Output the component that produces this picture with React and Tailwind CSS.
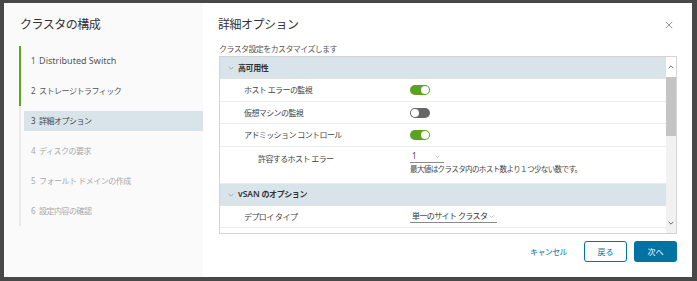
import React from 'react';

const FONT = { fontFamily: '"Noto Sans", "Noto Sans CJK JP", sans-serif' };

const steps = [
    { n: 1, label: 'Distributed Switch', done: true },
    { n: 2, label: 'ストレージトラフィック', done: true },
    { n: 3, label: '詳細オプション', active: true },
    { n: 4, label: 'ディスクの要求' },
    { n: 5, label: 'フォールト ドメインの作成' },
    { n: 6, label: '設定内容の確認' },
];

const Chevron = ({ className = '', up = false }) => (
    <svg viewBox="0 0 10 6" className={className} fill="none" stroke="currentColor" strokeWidth="1.2">
        {up ? <path d="M1 5 L5 1 L9 5" /> : <path d="M1 1 L5 5 L9 1" />}
    </svg>
);

const Toggle = ({ on }) => (
    <div className={`w-[20px] h-[10px] rounded-full flex items-center px-[1px] ${on ? 'bg-[#5aa220] justify-end' : 'bg-[#666666] justify-start'}`}>
        <div className="w-[8px] h-[8px] rounded-full bg-white" />
    </div>
);

const SectionHeader = ({ title }) => (
    <div className="h-[22px] bg-[#d9e4ea] flex items-center pl-[8px] text-[#333] border-b border-[#e3e3e3]">
        <Chevron className="w-[6px] h-[4px] text-[#8a9aa5] mr-[4px]" />
        <span className="text-[8px] tracking-[-0.4px] font-semibold">{title}</span>
    </div>
);

const Row = ({ label, children, h = 'h-[22px]' }) => (
    <div className={`${h} flex items-center border-b border-[#ececec]`}>
        <div className="w-[190px] pl-[24px] text-[8px] tracking-[-0.6px] text-[#444]">{label}</div>
        <div>{children}</div>
    </div>
);

export default function App() {
    return (
        <div className="w-[697px] h-[281px] bg-[#484848] pt-[3px] pl-[4px] pr-[5px] pb-[4px]" style={FONT}>
            <div className="flex h-full w-full">
                {/* wizard steps */}
                <div className="w-[199px] bg-[#fafafa] pt-[14px]">
                    <h2 className="pl-[16px] text-[12px] leading-[16px] tracking-[-0.5px] text-[#333]">クラスタの構成</h2>
                    <div className="mt-[13px] ml-[15px]">
                        {steps.map((s) => (
                            <div
                                key={s.n}
                                className={`h-[30px] border-l-2 ${s.done ? 'border-[#62a420]' : 'border-[#eaeaea]'} pl-[3px] flex items-center`}
                            >
                                <div
                                    className={`h-[20px] w-full flex items-center pl-[7px] text-[8px] tracking-[-0.5px] ${
                                        s.active ? 'bg-[#d9e4ea] text-[#444]' : s.done ? 'text-[#555]' : 'text-[#a8a8a8]'
                                    }`}
                                >
                                    <span className="mr-[4px]">{s.n}</span>
                                    <span className={s.n === 1 ? 'text-[9px] tracking-normal' : ''}>{s.label}</span>
                                </div>
                            </div>
                        ))}
                    </div>
                </div>

                {/* content */}
                <div className="flex-1 bg-white flex flex-col pl-[16px] pr-[15px] pt-[14px]">
                    <div className="flex items-center justify-between h-[16px]">
                        <h2 className="-ml-[1px] text-[12px] leading-[16px] tracking-[-0.5px] text-[#333]">詳細オプション</h2>
                        <svg viewBox="0 0 10 10" className="w-[8px] h-[8px] mr-[4px] text-[#777]" stroke="currentColor" strokeWidth="1">
                            <path d="M1 1 L9 9 M9 1 L1 9" />
                        </svg>
                    </div>
                    <p className="mt-[11px] text-[8px] leading-[10px] tracking-[-0.6px] text-[#555]">クラスタ設定をカスタマイズします</p>

                    <div className="mt-[2px] h-[178px] border border-[#d4d4d4] flex">
                        <div className="flex-1 overflow-hidden">
                            <SectionHeader title="高可用性" />
                            <Row label="ホスト エラーの監視" h="h-[23px]"><Toggle on /></Row>
                            <Row label="仮想マシンの監視"><Toggle on={false} /></Row>
                            <Row label="アドミッション コントロール" h="h-[23px]"><Toggle on /></Row>
                            <div className="h-[37px] flex items-start border-b border-[#ececec]">
                                <div className="w-[190px] pl-[38px] pt-[6px] text-[8px] tracking-[-0.6px] text-[#444]">許容するホスト エラー</div>
                                <div className="pt-[3px]">
                                    <div className="w-[34px] h-[13px] border-b border-[#8a8a8a] flex items-center justify-between pl-[2px] pr-[4px] text-[8px] text-[#444]">
                                        <span>1</span>
                                        <Chevron className="w-[5px] h-[3px] text-[#999]" />
                                    </div>
                                    <div className="mt-[1px] text-[7.5px] leading-[10px] tracking-[-0.6px] text-[#444] whitespace-nowrap">
                                        最大値はクラスタ内のホスト数より１つ少ない数です。
                                    </div>
                                </div>
                            </div>
                            <SectionHeader title={<><span className="text-[8.5px] tracking-normal">vSAN</span> のオプション</>} />
                            <Row label="デプロイ タイプ">
                                <div className="w-[87px] h-[13px] border-b border-[#8a8a8a] flex items-center justify-between pl-[2px] pr-[3px] text-[8px] tracking-[-0.6px] text-[#333]">
                                    <span>単一のサイト クラスタ</span>
                                    <Chevron className="w-[5px] h-[3px] text-[#999]" />
                                </div>
                            </Row>
                            <div className="h-[22px] flex items-start pt-[6px]">
                                <div className="w-[190px]" />
                                <div className="pl-[6px]"><div className="w-[10px] h-[2px] bg-[#666]" /></div>
                            </div>
                        </div>
                        {/* scrollbar */}
                        <div className="w-[10px] bg-[#f1f1f1] flex flex-col items-center">
                            <div className="h-[20px] w-full bg-white flex items-center justify-center">
                                <Chevron up className="w-[6px] h-[4px] text-[#333]" />
                            </div>
                            <div className="w-full h-[59px] bg-[#c4c4c4]" />
                            <div className="flex-1" />
                            <div className="h-[20px] w-full flex items-center justify-center">
                                <Chevron className="w-[6px] h-[4px] text-[#333]" />
                            </div>
                        </div>
                    </div>

                    <div className="mt-[7px] flex items-center justify-end">
                        <button className="text-[8px] tracking-[-0.6px] text-[#0072a3] mr-[17px]">キャンセル</button>
                        <button className="w-[43px] h-[21px] border border-[#0072a3] rounded-[3px] text-[8px] text-[#0072a3] mr-[7px]">戻る</button>
                        <button className="w-[43px] h-[21px] bg-[#0072a3] rounded-[3px] text-[8px] text-white">次へ</button>
                    </div>
                </div>
            </div>
        </div>
    );
}
